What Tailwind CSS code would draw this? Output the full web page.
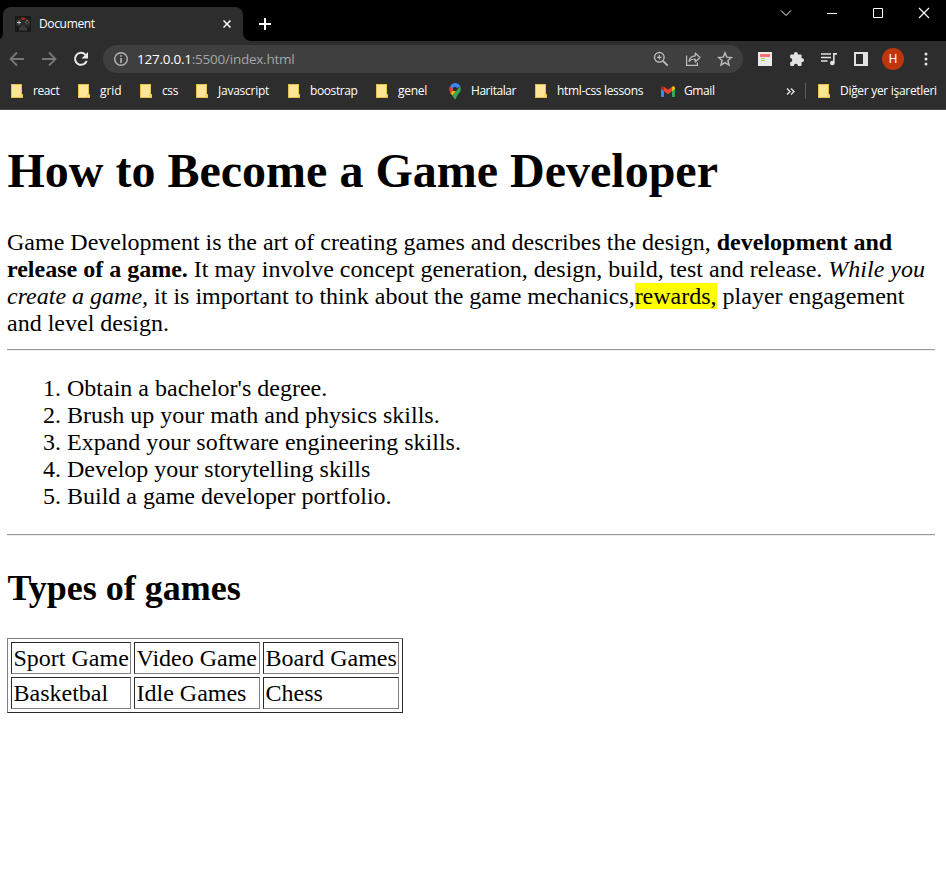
<!DOCTYPE html>
<html lang="tr">
<head>
<meta charset="utf-8">
<title>Document</title>
<script src="https://cdn.jsdelivr.net/npm/@tailwindcss/browser@4"></script>
</head>
<body class="w-[946px] h-[884px] overflow-hidden bg-white">
<svg class="hidden">
  <symbol id="folder" viewBox="0 0 12 14"><path d="M0 0h11v10h1v4H0z" fill="#e8c04a"/><path d="M1 1h9v9.500h-.500v2.500H1z" fill="#ffe596"/><path d="M10 11h1v2h-1z" fill="#ffe596"/></symbol>
</svg>
<header class="font-['Open_Sans',sans-serif] text-[12px] text-white">
  <!-- Tab strip -->
  <div class="h-[41px] bg-black flex">
    <div class="relative mt-[7px] ml-[3px] w-[240px] h-[34px] rounded-t-[8px] bg-[#2d2d2d] flex items-center">
      <svg class="ml-3 w-4 h-4 shrink-0" viewBox="0 0 16 16"><rect width="16" height="16" rx="1" fill="#191919"/><path d="M1 4q3-3 7-1 4-2 7 1v6l-3 1-2-1H6l-2 1-3-1z" fill="#2c2c2c"/><path d="M3.600 4.500h.9v1.600H6v.9H4.500v1.600h-.9V7H2v-.9h1.600z" fill="#c4c4c4"/><path d="M6 1.500h4v1.700L8 4 6 3.200z" fill="#b51e18"/><circle cx="12" cy="4.800" r=".7" fill="#c9a02e"/><circle cx="13.500" cy="6.200" r=".7" fill="#c23b2b"/><circle cx="10.700" cy="6.200" r=".7" fill="#3e6fb5"/><circle cx="12" cy="7.600" r=".7" fill="#378a54"/><path d="M4 12l3-2h2l3 2v2.500H4z" fill="#3c3c3c"/></svg>
      <span class="ml-2 leading-4 tracking-[-0.35px]">Document</span>
      <svg class="absolute left-[220px] top-[13px] w-[8px] h-[8px]" viewBox="0 0 8 8"><path d="M.5.5l7 7M7.500.5l-7 7" stroke="#fff" stroke-width="1.500"/></svg>
      <svg class="absolute -left-2 bottom-0 w-2 h-2" viewBox="0 0 8 8"><path d="M8 0v8H0a8 8 0 0 0 8-8" fill="#2d2d2d"/></svg>
      <svg class="absolute -right-2 bottom-0 w-2 h-2" viewBox="0 0 8 8"><path d="M0 0v8h8a8 8 0 0 1-8-8" fill="#2d2d2d"/></svg>
    </div>
    <svg class="ml-4 mt-[18px] w-3 h-3" viewBox="0 0 12 12"><path d="M6 0v12M0 6h12" stroke="#fff" stroke-width="2"/></svg>
    <div class="ml-auto mr-[16px] mt-[7px] h-3 flex items-center" >
      <svg class="w-[12px] h-3" viewBox="0 0 12 12"><path d="M1 3.500l5 5 5-5" fill="none" stroke="#fff"/></svg>
      <svg class="ml-[34px] w-[12px] h-3" viewBox="0 0 12 12"><path d="M1 6.500h10" stroke="#fff"/></svg>
      <svg class="ml-[34px] w-[12px] h-3" viewBox="0 0 12 12"><path d="M1.500 1.500h9v9h-9z" fill="none" stroke="#fff"/></svg>
      <svg class="ml-[34px] w-[12px] h-3" viewBox="0 0 12 12"><path d="M1 1l10 10M11 1L1 11" stroke="#fff" stroke-width="1.100"/></svg>
    </div>
  </div>
  <!-- Address bar -->
  <div class="h-[36px] bg-[#2d2d2d] flex items-center pl-[9px]">
    <svg class="w-4 h-4" viewBox="0 0 16 16"><path d="M15 8H2M8 1.500L1.500 8 8 14.500" fill="none" stroke="#777" stroke-width="1.800"/></svg>
    <svg class="ml-4 w-4 h-4" viewBox="0 0 16 16"><path d="M1 8h13M8 1.500L14.500 8 8 14.500" fill="none" stroke="#777" stroke-width="1.800"/></svg>
    <svg class="ml-4 w-4 h-4" viewBox="0 0 16 16"><path d="M13.700 9.800A6 6 0 1 1 12.500 3.800" fill="none" stroke="#e8e8e8" stroke-width="2"/><path d="M15 1v6.500H8.500z" fill="#e8e8e8"/></svg>
    <div class="ml-[14px] w-[640px] h-7 rounded-full bg-[#3f3f3f] flex items-center pl-[11px] pr-[10px]">
      <svg class="w-[14px] h-[14px]" viewBox="0 0 14 14"><circle cx="7" cy="7" r="6.300" fill="none" stroke="#b4b4b4" stroke-width="1.400"/><path d="M7 3.200v1.600M7 6v5" stroke="#b4b4b4" stroke-width="1.600"/></svg>
      <span class="ml-[9px] text-[13.500px] text-[#a5a5a5] leading-5 tracking-[-0.24px]"><span class="text-white">127.0.0.1</span>:5500/index.html</span>
      <div class="ml-auto flex items-center gap-4 text-[#bdbdbd]">
        <svg class="w-4 h-4" viewBox="0 0 16 16" fill="none" stroke="currentColor"><circle cx="6.300" cy="6.300" r="4.800" stroke-width="1.400"/><path d="M10 10l4.700 4.700" stroke-width="1.800"/><path d="M6.300 4v4.600M4 6.300h4.600" stroke-width="1.200"/></svg>
        <svg class="w-4 h-4" viewBox="0 0 16 16" fill="none" stroke="currentColor" stroke-width="1.200"><path d="M1.600 4.500v9.900h10.800v-3"/><path d="M4 10.500c.4-3.600 2.600-5.400 6.200-5.600V2L15 6.500 10.200 11V8c-2.600 0-4.700.5-6.200 2.500z" stroke-linejoin="round"/></svg>
        <svg class="w-4 h-4" viewBox="0 0 16 16" fill="none" stroke="currentColor" stroke-width="1.400"><path d="M8 1.900l1.800 4.200 4.600.4-3.500 3 1.100 4.500-4-2.400L4 14l1.100-4.500-3.500-3 4.600-.4z"/></svg>
      </div>
    </div>
    <svg class="ml-[15px] w-[14px] h-[14px]" viewBox="0 0 14 14"><path d="M0 0h14v14H0z" fill="#eaeaea"/><path d="M2 2h10v3H2z" fill="#ff6f73"/><path d="M3 6.500h4M3 8.500h4" stroke="#a1dc4e"/></svg>
    <svg class="ml-[17px] w-4 h-4" viewBox="0 0 16 16"><path d="M2.200 3.500H5V2.800a1.900 1.900 0 0 1 3.800 0v.7h2.800q1 0 1 1v2.700h.6a1.900 1.900 0 0 1 0 3.800h-.6v2.900q0 1-1 1H9a2.100 2.100 0 0 0-4.200 0H2.200q-1 0-1-1v-2.700a2.100 2.100 0 0 0 0-4.200V4.500q0-1 1-1z" fill="#e2e2e2"/></svg>
    <svg class="ml-4 w-4 h-4" viewBox="0 0 16 16"><path d="M0 3h10M0 6.500h10M0 10h6.500" stroke="#e2e2e2" stroke-width="1.600"/><path d="M12 12V2h4v1.800h-2.400v8.400" fill="#e2e2e2"/><circle cx="11.300" cy="12" r="2.300" fill="#e2e2e2"/></svg>
    <svg class="ml-[17px] w-[14px] h-[14px]" viewBox="0 0 14 14"><path d="M0 0h14v14H0zM2 2v10h7V2z" fill="#e2e2e2" fill-rule="evenodd"/></svg>
    <div class="ml-[14px] w-[22px] h-[22px] rounded-full bg-[#bf360c] flex items-center justify-center text-[12px] leading-none font-['Roboto',sans-serif]">H</div>
    <svg class="ml-[20px] w-[4px] h-[14px]" viewBox="0 0 4 14" fill="#e2e2e2"><circle cx="2" cy="2" r="1.500"/><circle cx="2" cy="7" r="1.500"/><circle cx="2" cy="12" r="1.500"/></svg>
  </div>
  <!-- Bookmarks -->
  <div class="h-[33px] bg-[#2d2d2d] border-b border-[#4b4b4b] flex pl-[11px] pt-[6px] leading-4 whitespace-nowrap">
    <div class="w-[67px] flex"><span class="w-[22px] pt-px"><svg class="w-3 h-[14px]"><use href="#folder"/></svg></span><span class="tracking-[-0.4px]">react</span></div>
    <div class="w-[62px] flex"><span class="w-[22px] pt-px"><svg class="w-3 h-[14px]"><use href="#folder"/></svg></span><span class="tracking-[-0.1px]">grid</span></div>
    <div class="w-[56px] flex"><span class="w-[22px] pt-px"><svg class="w-3 h-[14px]"><use href="#folder"/></svg></span><span class="tracking-[-0.4px]">css</span></div>
    <div class="w-[92px] flex"><span class="w-[22px] pt-px"><svg class="w-3 h-[14px]"><use href="#folder"/></svg></span><span class="tracking-[-0.25px]">Javascript</span></div>
    <div class="w-[88px] flex"><span class="w-[22px] pt-px"><svg class="w-3 h-[14px]"><use href="#folder"/></svg></span><span class="tracking-[-0.4px]">boostrap</span></div>
    <div class="w-[73px] flex"><span class="w-[22px] pt-px"><svg class="w-3 h-[14px]"><use href="#folder"/></svg></span><span class="tracking-[-0.25px]">genel</span></div>
    <div class="w-[86px] flex"><span class="w-[22px]"><svg class="w-3 h-4" viewBox="0 0 12 16"><path d="M1 3.500L6 6l-4.500 4.200Q-.8 6.500 1 3.500" fill="#ea4335"/><path d="M1 3.500Q3 0 6 0q3.500 0 5.300 3.200L6 7z" fill="#4285f4"/><path d="M6 6l-4.500 4.200 1.800 2.300L8 7z" fill="#fbbc04"/><path d="M11.300 3.200q1.200 3-.6 6Q7.500 12.500 7 16H5.500Q5 14.500 3.300 12.500z" fill="#34a853"/><circle cx="6" cy="6" r="2.200" fill="#2d2d2d"/></svg></span><span class="tracking-[-0.45px]">Haritalar</span></div>
    <div class="w-[127px] flex"><span class="w-[22px] pt-px"><svg class="w-3 h-[14px]"><use href="#folder"/></svg></span><span class="tracking-[-0.33px]">html-css lessons</span></div>
    <div class="w-[124px] flex"><span class="w-[22px] pt-[3px]"><svg class="-ml-px w-[14px] h-[11px]" viewBox="0 0 14 11"><path d="M0 2h3v9H1q-1 0-1-1z" fill="#4285f4"/><path d="M11 2h3v8q0 1-1 1h-2z" fill="#34a853"/><path d="M0 1.500Q1-.7 3 .7v4.500L0 3z" fill="#c5221f"/><path d="M3 .7l4 3 4-3v4.500l-4 3-4-3z" fill="#ea4335"/><path d="M11 .7q2-1.400 3 .8V3l-3 2.200z" fill="#fbbc04"/></svg></span><span class="tracking-[-0.4px]">Gmail</span></div>
    <svg class="mt-[5px] w-[9px] h-[7px]" viewBox="0 0 9 7"><path d="M1 .5l3 3-3 3M5 .5l3 3-3 3" fill="none" stroke="#e2e2e2" stroke-width="1.400"/></svg>
    <div class="ml-[10px] w-px h-4 bg-[#5c5c5c]"></div>
    <div class="ml-[12px] flex"><span class="w-[22px] pt-px"><svg class="w-3 h-[14px]"><use href="#folder"/></svg></span><span class="tracking-[-0.3px]">Diğer yer işaretleri</span></div>
  </div>
</header>
<main class="pl-[7px] pr-[11px] pt-[34px] font-['Liberation_Serif',serif] text-[24px] leading-[27px] text-black">
  <h1 class="pl-[0.5px] text-[48px] leading-[54px] font-bold mb-[31px]">How to Become a Game Developer</h1>
  <p>Game Development is the art of creating games and describes the design, <b>development and<br>release of a game.</b> It may involve concept generation, design, build, test and release. <i>While you<br>create a game,</i> it is important to think about the game mechanics,<mark class="bg-[#ffff00] text-black">rewards,</mark> player engagement<br>and level design.</p>
  <hr class="mt-3 h-[2px] border-t border-b border-t-[#9a9a9a] border-b-[#eeeeee]">
  <ol class="mt-6 pl-[60px] list-decimal">
    <li>Obtain a bachelor's degree.</li>
    <li>Brush up your math and physics skills.</li>
    <li>Expand your software engineering skills.</li>
    <li>Develop your storytelling skills</li>
    <li>Build a game developer portfolio.</li>
  </ol>
  <hr class="mt-6 h-[2px] border-t border-b border-t-[#9a9a9a] border-b-[#eeeeee]">
  <h2 class="mt-[32px] pl-[0.5px] text-[36px] leading-[41px] font-bold">Types of games</h2>
  <div class="mt-[29px] w-[396px] h-[75px] border border-t-[#808080] border-l-[#808080] border-b-[#2b2b2b] border-r-[#2b2b2b] p-[3px] pb-[2px] grid grid-cols-[120px_126px_136px] grid-rows-[32px_32px] gap-[3px] whitespace-nowrap">
    <div class="border border-t-[#2b2b2b] border-l-[#2b2b2b] border-b-[#808080] border-r-[#808080] pl-[1.5px] pt-[2px]">Sport Game</div>
    <div class="border border-t-[#2b2b2b] border-l-[#2b2b2b] border-b-[#808080] border-r-[#808080] pl-[1.5px] pt-[2px]">Video Game</div>
    <div class="border border-t-[#2b2b2b] border-l-[#2b2b2b] border-b-[#808080] border-r-[#808080] pl-[1.5px] pt-[2px]">Board Games</div>
    <div class="border border-t-[#2b2b2b] border-l-[#2b2b2b] border-b-[#808080] border-r-[#808080] pl-[1.5px] pt-[2px]">Basketbal</div>
    <div class="border border-t-[#2b2b2b] border-l-[#2b2b2b] border-b-[#808080] border-r-[#808080] pl-[1.5px] pt-[2px]">Idle Games</div>
    <div class="border border-t-[#2b2b2b] border-l-[#2b2b2b] border-b-[#808080] border-r-[#808080] pl-[1.5px] pt-[2px]">Chess</div>
  </div>
</main>
</body>
</html>
